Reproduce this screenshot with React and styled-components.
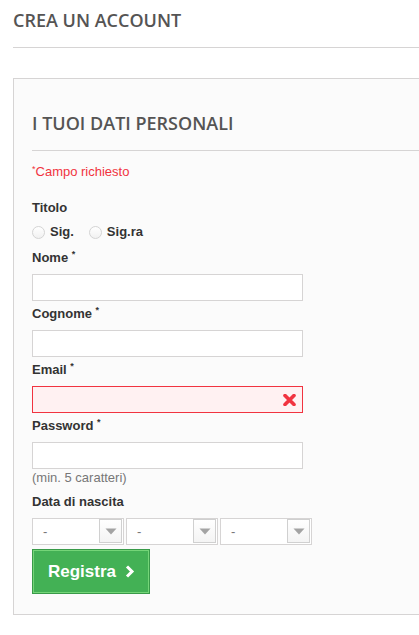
import React from "react";
import styled, { createGlobalStyle } from "styled-components";

const Global = createGlobalStyle`
  html, body { margin: 0; padding: 0; background: #ffffff; overflow: hidden; }
  body { font-family: "Liberation Sans", Arial, sans-serif; color: #333333; }
  * { box-sizing: border-box; }
`;

const Page = styled.div`
  padding: 9px 0 0 13px;
  width: 100%;
  overflow: hidden;
`;

const PageHeading = styled.h1`
  margin: 0 0 30px;
  padding: 0 0 16px;
  font: 600 18px/22px "Open Sans", sans-serif;
  color: #555454;
  text-transform: uppercase;
  border-bottom: 1px solid #d6d4d4;
`;

const Box = styled.div`
  margin-right: -60px;
  background: #fbfbfb;
  border: 1px solid #d6d4d4;
  padding: 33px 18px 20px;
`;

const SubHeading = styled.h3`
  margin: 0 0 12px;
  padding: 0 0 16px;
  font: 600 18px/22px "Open Sans", sans-serif;
  color: #555454;
  text-transform: uppercase;
  border-bottom: 1px solid #d6d4d4;
`;

const Star = styled.sup`
  font-size: 9px;
  line-height: 0;
  position: relative;
  top: ${(p) => (p.$lead ? "-4px" : "-5px")};
  vertical-align: baseline;
`;

const Required = styled.p`
  margin: 0 0 18px;
  font: 13px/18px "Liberation Sans", Arial, sans-serif;
  color: #f13340;
`;

const Label = styled.label`
  display: block;
  font: bold 13px/18px "Liberation Sans", Arial, sans-serif;
  color: #333333;
  margin-bottom: ${(p) => p.$mb ?? 7}px;
`;

const RadioRow = styled.div`
  display: flex;
  align-items: center;
  height: 18px;
`;

const RadioOption = styled.label`
  display: flex;
  align-items: center;
  gap: 5px;
  margin-right: 15px;
  font: bold 13px/18px "Liberation Sans", Arial, sans-serif;
  color: #333333;
`;

const RadioCircle = styled.span`
  display: inline-block;
  width: 13px;
  height: 13px;
  border-radius: 50%;
  border: 1px solid #d4d4d4;
  background: linear-gradient(#ffffff, #f1f1f1);
`;

const Field = styled.div`
  margin-top: ${(p) => p.$mt ?? 4}px;
`;

const InputWrap = styled.div`
  position: relative;
  width: 271px;
`;

const Input = styled.div`
  width: 271px;
  height: 27px;
  border: 1px solid ${(p) => (p.$error ? "#f13340" : "#d6d4d4")};
  background: ${(p) => (p.$error ? "#fff1f2" : "#ffffff")};
`;

const ErrorIcon = styled.svg`
  position: absolute;
  right: 7px;
  top: 8px;
  width: 13px;
  height: 12px;
`;

const Hint = styled.p`
  margin: 0;
  font: 13px/18px "Liberation Sans", Arial, sans-serif;
  color: #777777;
`;

const SelectRow = styled.div`
  display: flex;
  gap: 2px;
`;

const Selector = styled.div`
  width: 92px;
  height: 27px;
  border: 1px solid #d6d4d4;
  background: #ffffff;
  display: flex;
  justify-content: space-between;
  align-items: flex-start;
`;

const SelectValue = styled.span`
  padding-left: 10px;
  font: 13px/25px "Liberation Sans", Arial, sans-serif;
  color: #777777;
`;

const ArrowBox = styled.span`
  width: 23px;
  height: 24px;
  margin-right: 1px;
  border: 1px solid #d0d0d0;
  background: linear-gradient(#ffffff, #f4f4f4);
  display: flex;
  align-items: center;
  justify-content: center;
`;

const Button = styled.button`
  margin-top: 4px;
  padding: 0;
  display: block;
  border: 1px solid #399a49;
  background: #43b155;
  cursor: pointer;
`;

const ButtonInner = styled.span`
  display: flex;
  align-items: center;
  gap: 9px;
  padding: 10px 13px 10px 14px;
  border: 1px solid #74d578;
  font: bold 17px/21px "Liberation Sans", Arial, sans-serif;
  color: #ffffff;
`;

const Chevron = () => (
  <svg width="10" height="13" viewBox="0 0 10 13">
    <path d="M2 1.5 L7 6.5 L2 11.5" fill="none" stroke="#ffffff" strokeWidth="3" />
  </svg>
);

const Caret = () => (
  <svg width="12" height="7" viewBox="0 0 12 7">
    <path d="M0.5 0.5 H11.5 L6 6.5 Z" fill="#a3a3a3" />
  </svg>
);

const fields = [
  { label: "Nome", mt: 8 },
  { label: "Cognome" },
  { label: "Email", error: true },
  { label: "Password", hint: "(min. 5 caratteri)" },
];

export default function App() {
  return (
    <>
      <Global />
      <Page>
        <PageHeading>Crea un account</PageHeading>
        <Box>
          <SubHeading>I tuoi dati personali</SubHeading>
          <Required>
            <Star $lead>*</Star>Campo richiesto
          </Required>
          <Label $mb={6}>Titolo</Label>
          <RadioRow>
            <RadioOption>
              <RadioCircle />
              Sig.
            </RadioOption>
            <RadioOption>
              <RadioCircle />
              Sig.ra
            </RadioOption>
          </RadioRow>
          {fields.map((f) => (
            <Field key={f.label} $mt={f.mt}>
              <Label>
                {f.label} <Star>*</Star>
              </Label>
              <InputWrap>
                <Input $error={f.error} />
                {f.error && (
                  <ErrorIcon viewBox="0 0 13 12">
                    <path
                      d="M2 1.5 L11 10.5 M11 1.5 L2 10.5"
                      stroke="#f13340"
                      strokeWidth="3.6"
                      strokeLinecap="round"
                    />
                  </ErrorIcon>
                )}
              </InputWrap>
              {f.hint && <Hint>{f.hint}</Hint>}
            </Field>
          ))}
          <Field $mt={6}>
            <Label>Data di nascita</Label>
            <SelectRow>
              {[0, 1, 2].map((i) => (
                <Selector key={i}>
                  <SelectValue>-</SelectValue>
                  <ArrowBox>
                    <Caret />
                  </ArrowBox>
                </Selector>
              ))}
            </SelectRow>
          </Field>
          <Button>
            <ButtonInner>
              Registra
              <Chevron />
            </ButtonInner>
          </Button>
        </Box>
      </Page>
    </>
  );
}
